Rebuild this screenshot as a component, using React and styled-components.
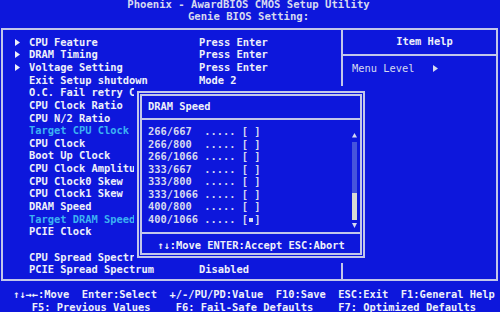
import React from 'react';
import styled, { createGlobalStyle } from 'styled-components';

const BLUE = '#0d17dc';
const LINE = '#c2c6ea';
const TEXT = '#eef0fa';
const SOFT = '#d6d9f0';
const CYAN = '#3cb2f2';

const Global = createGlobalStyle`
  html, body { margin: 0; padding: 0; background: ${BLUE}; }
  body { width: 500px; height: 312px; overflow: hidden; }
`;

const Screen = styled.div`
  position: relative;
  display: flex;
  flex-direction: column;
  width: 500px;
  height: 312px;
  overflow: hidden;
  background: ${BLUE};
  color: ${TEXT};
  font-family: "DejaVu Sans Mono", "Liberation Mono", monospace;
  font-weight: bold;
  font-size: 10.4px;
  white-space: pre;
`;

const Title = styled.header`
  margin-top: -1px;
  height: 29px;
  flex: none;
  text-align: center;
  font-size: 10.6px;
  line-height: 11.5px;
  color: ${SOFT};
  padding-right: 3px;
`;

const Frame = styled.main`
  flex: none;
  height: 253px;
  margin: 0 2px 0 1px;
  box-sizing: border-box;
  border: 2px solid ${LINE};
  display: flex;
`;

const MenuPanel = styled.section`
  width: 340px;
  box-sizing: border-box;
  border-right: 2px solid ${LINE};
  padding: 5.7px 0 0 12px;
`;

const Row = styled.div`
  display: grid;
  grid-template-columns: 14px 170px auto;
  align-items: center;
  height: 12.65px;
  line-height: 12.65px;
  color: ${(p) => (p.$active ? CYAN : TEXT)};
`;

const Arrow = styled.svg`
  width: 5px;
  height: 7px;
  display: block;
`;

const HelpPanel = styled.aside`
  flex: 1;
  display: flex;
  flex-direction: column;
`;

const HelpHead = styled.div`
  height: 23.5px;
  line-height: 23.5px;
  text-align: center;
  border-bottom: 2px solid ${LINE};
  padding-left: 10px;
`;

const HelpBody = styled.div`
  padding: 6.4px 0 0 9px;
  line-height: 12.6px;
  font-weight: normal;
  color: ${SOFT};
  display: flex;
  align-items: center;
`;

const Keys = styled.footer`
  padding: 7px 0 0 13px;
  line-height: 13px;
  font-size: 10.4px;
`;

const Popup = styled.div`
  position: absolute;
  left: 134px;
  top: 86px;
  width: 234px;
  height: 177px;
  box-sizing: border-box;
  padding: 5px 3px 5.3px 3px;
  background: ${BLUE};
`;

const Box = styled.div`
  height: 100%;
  box-sizing: border-box;
  border: 5px double ${LINE};
  display: flex;
  flex-direction: column;
`;

const PopHead = styled.div`
  padding: 3.7px 6px 6.2px;
  line-height: 12.6px;
  border-bottom: 2px solid ${LINE};
`;

const PopList = styled.div`
  flex: 1;
  display: flex;
  padding: 4.9px 2.7px 0 6px;
`;

const Options = styled.div`
  flex: 1;
  line-height: 12.52px;
  color: ${SOFT};
`;

const Scroll = styled.div`
  width: 5.3px;
  margin-top: 8px;
  display: flex;
  flex-direction: column;
  align-items: center;
`;

const Track = styled.div`
  width: 100%;
  height: 77.7px;
  margin: 4.5px 0 2.7px;
  background: #4654dc;
  display: flex;
  flex-direction: column;
  justify-content: flex-end;
`;

const Thumb = styled.div`
  height: 27px;
  background: #d8d8d4;
`;

const Mark = styled.span`
  display: inline-flex;
  width: 1ch;
  justify-content: center;
  vertical-align: middle;
  &::after {
    content: '';
    width: 3.5px;
    height: 3.5px;
    background: ${(p) => (p.$on ? SOFT : 'transparent')};
  }
`;

const PopFoot = styled.div`
  height: 20.7px;
  box-sizing: border-box;
  border-top: 2px solid ${LINE};
  padding-top: 4.7px;
  line-height: 12.6px;
  text-align: center;
`;

const Tri = ({ dir = 'right', w = 5, h = 7, color = TEXT }) => {
  const pts = {
    right: `0,0 ${w},${h / 2} 0,${h}`,
    up: `0,${h} ${w / 2},0 ${w},${h}`,
    down: `0,0 ${w},0 ${w / 2},${h}`,
  }[dir];
  return (
    <Arrow viewBox={`0 0 ${w} ${h}`} style={{ width: w, height: h }}>
      <polygon points={pts} fill={color} />
    </Arrow>
  );
};

const items = [
  { sub: true, label: 'CPU Feature', value: 'Press Enter' },
  { sub: true, label: 'DRAM Timing', value: 'Press Enter' },
  { sub: true, label: 'Voltage Setting', value: 'Press Enter' },
  { label: 'Exit Setup shutdown', value: 'Mode 2' },
  { label: 'O.C. Fail retry Count', value: '' },
  { label: 'CPU Clock Ratio', value: '' },
  { label: 'CPU N/2 Ratio', value: '' },
  { label: 'Target CPU Clock', active: true },
  { label: 'CPU Clock' },
  { label: 'Boot Up Clock' },
  { label: 'CPU Clock Amplitude' },
  { label: 'CPU Clock0 Skew' },
  { label: 'CPU Clock1 Skew' },
  { label: 'DRAM Speed' },
  { label: 'Target DRAM Speed', active: true },
  { label: 'PCIE Clock' },
  { label: '' },
  { label: 'CPU Spread Spectrum' },
  { label: 'PCIE Spread Spectrum', value: 'Disabled' },
];

const speeds = ['266/667', '266/800', '266/1066', '333/667', '333/800', '333/1066', '400/800', '400/1066'];

export default function App() {
  return (
    <Screen>
      <Global />
      <Title>
        {'Phoenix - AwardBIOS CMOS Setup Utility\n'}
        {'Genie BIOS Setting:'}
      </Title>
      <Frame>
        <MenuPanel>
          {items.map((it, i) => (
            <Row key={i} $active={it.active}>
              <span>{it.sub ? <Tri /> : null}</span>
              <span>{it.label}</span>
              <span>{it.value || ''}</span>
            </Row>
          ))}
        </MenuPanel>
        <HelpPanel>
          <HelpHead>Item Help</HelpHead>
          <HelpBody>
            {'Menu Level   '}
            <Tri color={SOFT} />
          </HelpBody>
        </HelpPanel>
      </Frame>
      <Keys>
        {'↑↓→←:Move  Enter:Select  +/-/PU/PD:Value  F10:Save  ESC:Exit  F1:General Help\n'}
        {'   F5: Previous Values    F6: Fail-Safe Defaults    F7: Optimized Defaults'}
      </Keys>
      <Popup>
        <Box>
          <PopHead>DRAM Speed</PopHead>
          <PopList>
            <Options>
              {speeds.map((s, i) => (
                <div key={s}>
                  {s.padEnd(9) + '..... ['}
                  <Mark $on={i === speeds.length - 1} />
                  {']'}
                </div>
              ))}
            </Options>
            <Scroll>
              <Tri dir="up" w={5} h={4.5} color={SOFT} />
              <Track>
                <Thumb />
              </Track>
              <Tri dir="down" w={5} h={5} color={SOFT} />
            </Scroll>
          </PopList>
          <PopFoot>↑↓:Move ENTER:Accept ESC:Abort</PopFoot>
        </Box>
      </Popup>
    </Screen>
  );
}
